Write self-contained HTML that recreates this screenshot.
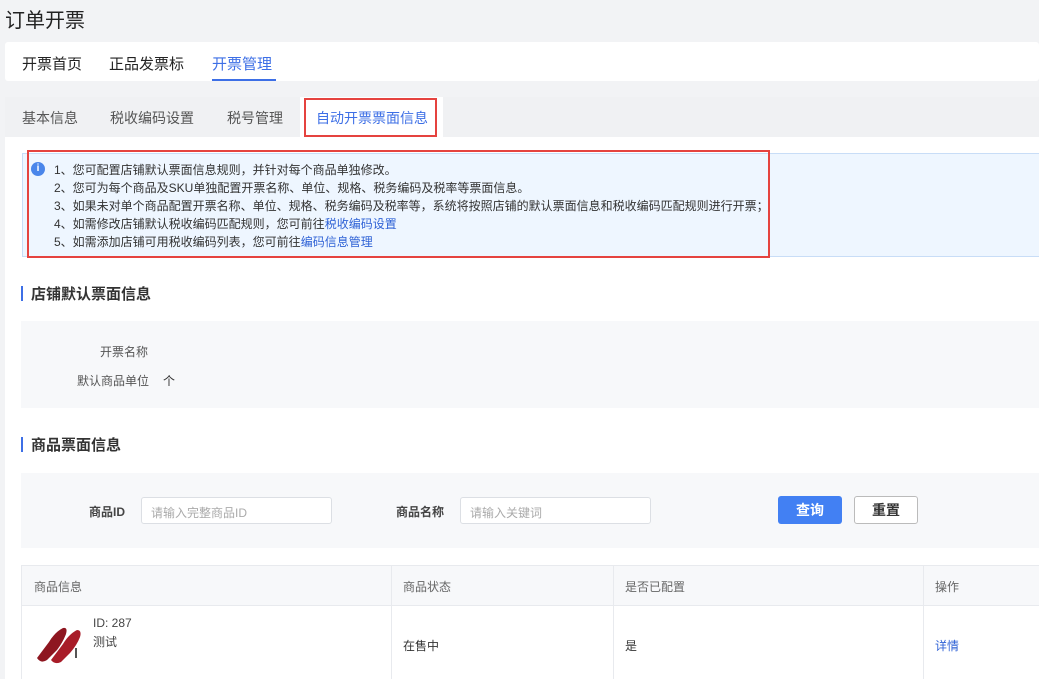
<!DOCTYPE html>
<html><head><meta charset="utf-8"><style>
*{margin:0;padding:0;box-sizing:border-box}
body{width:1039px;height:679px;overflow:hidden;background:#f2f3f5;font-family:"Liberation Sans","Noto Sans CJK SC",sans-serif;color:#333;position:relative}
.a{position:absolute;white-space:nowrap}
.t{font-size:15px}
.s{font-size:14px;color:#555}
.f{font-size:12px;color:#333}
.blue{color:#2f62d6}
</style></head><body>
<div class="a" style="left:5px;top:4px;font-size:20px;color:#222">订单开票</div>
<div class="a" style="left:5px;top:42px;width:1034px;height:39px;background:#fff;border-radius:3px"></div>
<div class="a t" style="left:22px;top:53px;color:#222">开票首页</div>
<div class="a t" style="left:109px;top:53px;color:#222">正品发票标</div>
<div class="a t" style="left:212px;top:53px;color:#3d6fe6">开票管理</div>
<div class="a" style="left:212px;top:79px;width:64px;height:2px;background:#3d6fe6"></div>

<div class="a" style="left:5px;top:97px;width:1034px;height:40px;background:#f0f1f3"></div>
<div class="a s" style="left:22px;top:108px">基本信息</div>
<div class="a s" style="left:110px;top:108px">税收编码设置</div>
<div class="a s" style="left:227px;top:108px">税号管理</div>
<div class="a" style="left:300px;top:97px;width:143px;height:40px;background:#fff"></div>
<div class="a" style="left:304px;top:98px;width:133px;height:39px;border:2px solid #e5433f"></div>
<div class="a" style="left:316px;top:108px;font-size:14px;color:#3d6fe6">自动开票票面信息</div>

<div class="a" style="left:5px;top:137px;width:1034px;height:542px;background:#fff"></div>
<div class="a" style="left:22px;top:153px;width:1017px;height:104px;background:#eef6ff;border:1px solid #c8ddf7;border-right:none"></div>
<div class="a" style="left:27px;top:150px;width:743px;height:108px;border:2px solid #e5433f"></div>
<div class="a" style="left:31px;top:162px;width:14px;height:14px;border-radius:50%;background:#4a86ea;color:#fff;font-size:10px;text-align:center;line-height:14px;font-weight:bold">i</div>
<div class="a f" style="left:54px;top:161px;line-height:18px">1、您可配置店铺默认票面信息规则，并针对每个商品单独修改。<br>2、您可为每个商品及SKU单独配置开票名称、单位、规格、税务编码及税率等票面信息。<br>3、如果未对单个商品配置开票名称、单位、规格、税务编码及税率等，系统将按照店铺的默认票面信息和税收编码匹配规则进行开票；<br>4、如需修改店铺默认税收编码匹配规则，您可前往<span class="blue">税收编码设置</span><br>5、如需添加店铺可用税收编码列表，您可前往<span class="blue">编码信息管理</span></div>

<div class="a" style="left:21px;top:286px;width:2px;height:15px;background:#3d6fe6"></div>
<div class="a" style="left:31px;top:283px;font-size:15px;font-weight:bold;color:#333">店铺默认票面信息</div>
<div class="a" style="left:21px;top:321px;width:1018px;height:87px;background:#f7f8fa"></div>
<div class="a f" style="left:100px;top:343px;color:#555">开票名称</div>
<div class="a f" style="left:77px;top:372px;color:#555">默认商品单位</div>
<div class="a f" style="left:163px;top:372px">个</div>

<div class="a" style="left:21px;top:437px;width:2px;height:15px;background:#3d6fe6"></div>
<div class="a" style="left:31px;top:434px;font-size:15px;font-weight:bold;color:#333">商品票面信息</div>
<div class="a" style="left:21px;top:473px;width:1018px;height:75px;background:#f7f8fa"></div>
<div class="a f" style="left:89px;top:503px;font-weight:bold;color:#444">商品ID</div>
<div class="a" style="left:141px;top:497px;width:191px;height:27px;background:#fff;border:1px solid #dcdfe4;border-radius:3px;font-size:12px;color:#aaa;padding:6px 9px">请输入完整商品ID</div>
<div class="a f" style="left:396px;top:503px;font-weight:bold;color:#444">商品名称</div>
<div class="a" style="left:460px;top:497px;width:191px;height:27px;background:#fff;border:1px solid #dcdfe4;border-radius:3px;font-size:12px;color:#aaa;padding:6px 9px">请输入关键词</div>
<div class="a" style="left:778px;top:496px;width:64px;height:28px;background:#4280f3;border-radius:3px;color:#fff;font-size:14px;font-weight:bold;text-align:center;line-height:28px">查询</div>
<div class="a" style="left:854px;top:496px;width:64px;height:28px;background:#fff;border:1px solid #bbb;border-radius:3px;color:#333;font-size:14px;font-weight:bold;text-align:center;line-height:26px">重置</div>

<div class="a" style="left:21px;top:565px;width:1018px;height:114px;border:1px solid #e8eaee;border-right:none;border-bottom:none"></div>
<div class="a" style="left:22px;top:566px;width:1017px;height:40px;background:#f7f8fa;border-bottom:1px solid #e8eaee"></div>
<div class="a" style="left:391px;top:566px;width:1px;height:113px;background:#e8eaee"></div>
<div class="a" style="left:613px;top:566px;width:1px;height:113px;background:#e8eaee"></div>
<div class="a" style="left:923px;top:566px;width:1px;height:113px;background:#e8eaee"></div>
<div class="a f" style="left:34px;top:578px;color:#666">商品信息</div>
<div class="a f" style="left:403px;top:578px;color:#666">商品状态</div>
<div class="a f" style="left:625px;top:578px;color:#666">是否已配置</div>
<div class="a f" style="left:935px;top:578px;color:#666">操作</div>
<svg class="a" style="left:35px;top:622px" width="50" height="42" viewBox="0 0 50 42"><path d="M2 36 L14 20 Q20 10 28 6 Q33 5 31 12 Q28 20 22 28 L12 38 Q6 42 2 36Z" fill="#8e1620"/><path d="M16 38 L28 22 Q34 12 42 8 Q47 8 45 15 Q42 23 35 31 L26 40 Q20 43 16 38Z" fill="#a81c28"/><rect x="40" y="26" width="2" height="10" fill="#555"/></svg>
<div class="a f" style="left:93px;top:616px;color:#444">ID: 287</div>
<div class="a f" style="left:93px;top:633px;color:#444">测试</div>
<div class="a f" style="left:403px;top:637px">在售中</div>
<div class="a f" style="left:625px;top:637px">是</div>
<div class="a f blue" style="left:935px;top:637px">详情</div>
</body></html>
